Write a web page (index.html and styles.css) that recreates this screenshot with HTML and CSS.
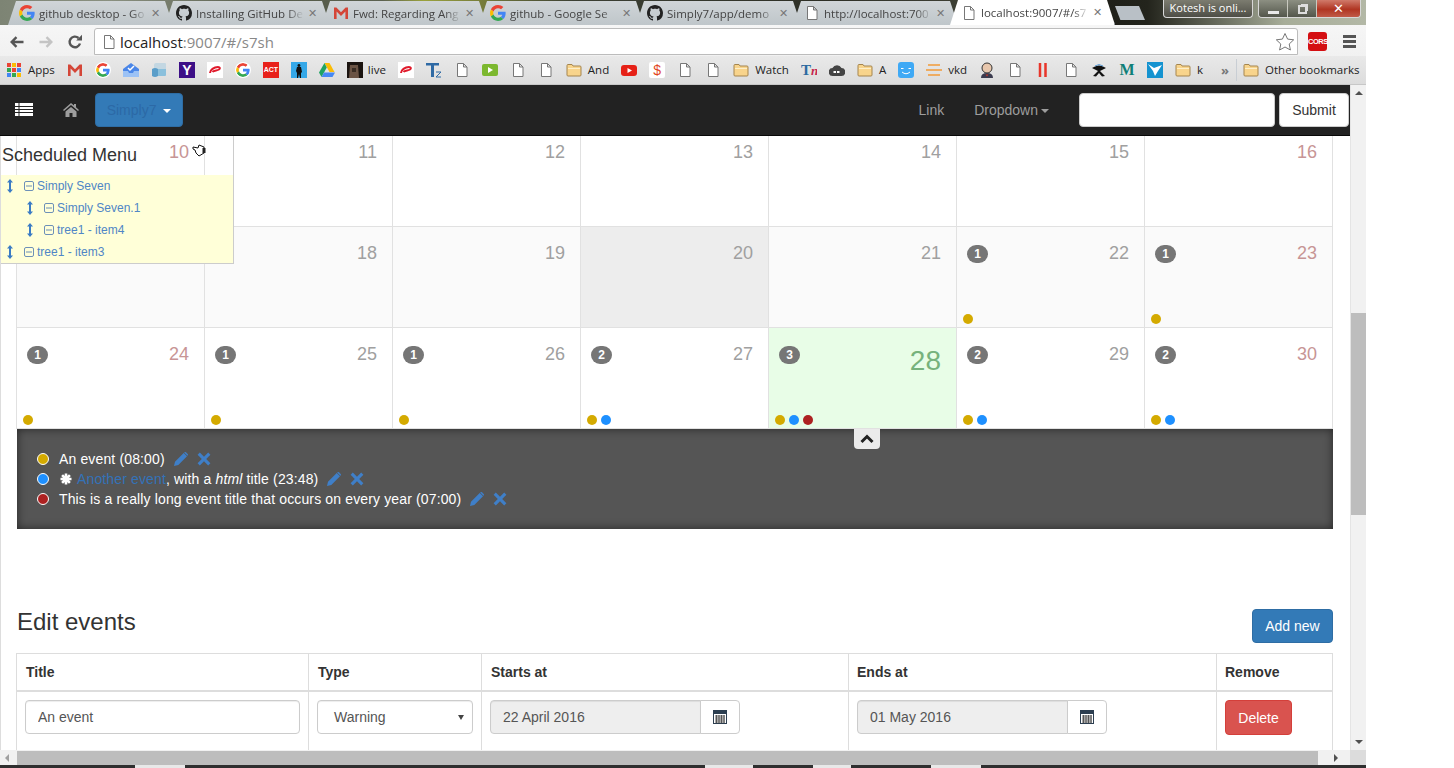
FILE: index.html
```html
<!DOCTYPE html>
<html lang="en">
<head>
<meta charset="utf-8">
<title>localhost:9007/#/s7sh</title>
<link rel="stylesheet" href="styles.css">
</head>
<body>
<svg class="defs" width="0" height="0" aria-hidden="true">
  <symbol id="doc" viewBox="0 0 16 16"><path d="M3.5 1.5h6l3.5 3.5v9.5h-9.5z M9.5 1.5v3.5h3.5" fill="#fff" stroke="#777" stroke-width="1"/></symbol>
  <symbol id="folder" viewBox="0 0 16 16"><path d="M1 3.5q0-1 1-1h4l1 1.5h7q1 0 1 1v8q0 1-1 1H2q-1 0-1-1z" fill="#f8d48c" stroke="#a5854e"/><path d="M2 6h12v1H2z" fill="#fdeec8"/></symbol>
  <symbol id="g" viewBox="0 0 48 48">
    <path fill="#EA4335" d="M24 9.5c3.54 0 6.71 1.22 9.21 3.6l6.85-6.85C35.9 2.38 30.47 0 24 0 14.62 0 6.51 5.38 2.56 13.22l7.98 6.19C12.43 13.72 17.74 9.5 24 9.5z"/>
    <path fill="#4285F4" d="M46.98 24.55c0-1.57-.15-3.09-.38-4.55H24v9.02h12.94c-.58 2.96-2.26 5.48-4.78 7.18l7.73 6c4.51-4.18 7.09-10.36 7.09-17.65z"/>
    <path fill="#FBBC05" d="M10.53 28.59c-.48-1.45-.76-2.99-.76-4.59s.27-3.14.76-4.59l-7.98-6.19C.92 16.46 0 20.12 0 24c0 3.88.92 7.54 2.56 10.78l7.97-6.19z"/>
    <path fill="#34A853" d="M24 48c6.48 0 11.93-2.13 15.89-5.81l-7.73-6c-2.15 1.45-4.92 2.3-8.16 2.3-6.26 0-11.57-4.22-13.47-9.91l-7.98 6.19C6.51 42.62 14.62 48 24 48z"/>
  </symbol>
  <symbol id="gh" viewBox="0 0 16 16"><path fill="#222" d="M8 0C3.58 0 0 3.58 0 8c0 3.54 2.29 6.53 5.47 7.59.4.07.55-.17.55-.38 0-.19-.01-.82-.01-1.49-2.01.37-2.53-.49-2.69-.94-.09-.23-.48-.94-.82-1.13-.28-.15-.68-.52-.01-.53.63-.01 1.08.58 1.23.82.72 1.21 1.87.87 2.33.66.07-.52.28-.87.51-1.07-1.78-.2-3.64-.89-3.64-3.95 0-.87.31-1.59.82-2.15-.08-.2-.36-1.02.08-2.12 0 0 .67-.21 2.2.82.64-.18 1.32-.27 2-.27.68 0 1.36.09 2 .27 1.53-1.04 2.2-.82 2.2-.82.44 1.1.16 1.92.08 2.12.51.56.82 1.27.82 2.15 0 3.07-1.87 3.75-3.65 3.95.29.25.54.73.54 1.48 0 1.07-.01 1.93-.01 2.2 0 .21.15.46.55.38A8.013 8.013 0 0016 8c0-4.42-3.58-8-8-8z"/></symbol>
  <symbol id="gmail" viewBox="0 0 16 16"><path fill="#d44638" d="M1 2.5h2.4L8 7.2l4.6-4.7H15V14h-2.6V6.6L8 11 3.6 6.6V14H1z"/></symbol>
  <symbol id="airtel" viewBox="0 0 16 16"><rect width="16" height="16" fill="#fff"/><path d="M3 11c0-3 4-6 8-6 2 0 2.500 1.500 1 2.500-2 1.300-5 .5-6.500 2.500" fill="none" stroke="#e01a2b" stroke-width="2"/></symbol>
  <symbol id="pencil" viewBox="0 0 14 14"><path fill="#3f7fc8" d="M0 14l1-4.200L9.700 1l3.300 3.300L4.300 13zM10.500.3q.8-.6 1.500 0l1.700 1.700q.6.700 0 1.500l-.3.300-3.300-3.300z"/></symbol>
  <symbol id="cross" viewBox="0 0 14 14"><path fill="#3f7fc8" d="M2.800.6L7 4.800 11.200.6l2.200 2.200L9.200 7l4.200 4.200-2.200 2.200L7 9.200l-4.200 4.200-2.200-2.200L4.800 7 .6 2.800z"/></symbol>
  <symbol id="cal" viewBox="0 0 14 14"><rect x=".5" y=".5" width="13" height="13" fill="#fff" stroke="#2c3e50"/><rect x="1" y="1" width="12" height="3" fill="#2c3e50"/><path d="M2 6h10M2 8h10M2 10h10M2 12h10M3.500 5v8M6 5v8M8.500 5v8M11 5v8" stroke="#555" stroke-width="1"/></symbol>
  <symbol id="updown" viewBox="0 0 8 14"><path fill="#3a7bc4" d="M4 0l3 3.500H5v7h2L4 14l-3-3.500h2v-7H1z"/></symbol>
  <symbol id="minus" viewBox="0 0 10 10"><rect x=".5" y=".5" width="9" height="9" rx="1.500" fill="none" stroke="#6d90b8"/><path d="M2 5h6" stroke="#6d90b8"/></symbol>
</svg>

<div class="gutter">
<div class="screen">
  <div class="tabstrip">
    <div class="tab"><svg class="fav"><use href="#g"/></svg><span class="tab-title">github desktop - Go</span><span class="tab-x">✕</span></div>
    <div class="tab"><svg class="fav"><use href="#gh"/></svg><span class="tab-title">Installing GitHub De</span><span class="tab-x">✕</span></div>
    <div class="tab"><svg class="fav"><use href="#gmail"/></svg><span class="tab-title">Fwd: Regarding Ang</span><span class="tab-x">✕</span></div>
    <div class="tab"><svg class="fav"><use href="#g"/></svg><span class="tab-title">github - Google Se</span><span class="tab-x">✕</span></div>
    <div class="tab"><svg class="fav"><use href="#gh"/></svg><span class="tab-title">Simply7/app/demo</span><span class="tab-x">✕</span></div>
    <div class="tab"><svg class="fav"><use href="#doc"/></svg><span class="tab-title">http://localhost:700</span><span class="tab-x">✕</span></div>
    <div class="tab tab-active"><svg class="fav"><use href="#doc"/></svg><span class="tab-title">localhost:9007/#/s7</span><span class="tab-x">✕</span></div>
    <div class="newtab"></div>
    <div class="notifier">Kotesh is onli...</div>
    <div class="winctl">
      <span class="win win-min"><i class="min-bar"></i></span>
      <span class="win win-max"><i class="max-box"></i></span>
      <span class="win win-close">✕</span>
    </div>
  </div>

  <div class="toolbar">
    <svg class="tool" viewBox="0 0 16 16"><path d="M14.500 8H3M7.500 3.200L2.700 8l4.800 4.800" fill="none" stroke="#555" stroke-width="2.400"/></svg>
    <svg class="tool" viewBox="0 0 16 16"><path d="M1.500 8H13M8.500 3.200L13.300 8l-4.800 4.800" fill="none" stroke="#c4c4c4" stroke-width="2.400"/></svg>
    <svg class="tool" viewBox="0 0 16 16"><path d="M13 9.500A5.300 5.300 0 1 1 11.500 4" fill="none" stroke="#555" stroke-width="2.400"/><path d="M9.200 6.500H15V.8z" fill="#555"/></svg>
    <div class="omnibox">
      <svg class="omni-doc"><use href="#doc"/></svg>
      <span class="url"><span class="url-host">localhost</span>:9007/#/s7sh</span>
      <svg class="star" viewBox="0 0 20 20"><path d="M10 1.500l2.600 5.600 6.100.7-4.500 4.200 1.200 6L10 15l-5.400 3 1.200-6L1.300 7.800l6.100-.7z" fill="#fff" stroke="#777"/></svg>
    </div>
    <span class="cors">CORS</span>
    <span class="hamburger"><i></i><i></i><i></i></span>
  </div>

  <div class="bookmarks">
    <a class="bm bm-text"><svg class="ic" viewBox="0 0 16 16"><path fill="#ea4335" d="M1 1h4v4H1z"/><path fill="#fbbc05" d="M6 1h4v4H6z"/><path fill="#ea4335" d="M11 1h4v4h-4z"/><path fill="#34a853" d="M1 6h4v4H1z"/><path fill="#ea4335" d="M6 6h4v4H6z"/><path fill="#4285f4" d="M11 6h4v4h-4z"/><path fill="#4285f4" d="M1 11h4v4H1z"/><path fill="#34a853" d="M6 11h4v4H6z"/><path fill="#fbbc05" d="M11 11h4v4h-4z"/></svg>Apps</a>
    <a class="bm"><svg class="ic"><use href="#gmail"/></svg></a>
    <a class="bm"><svg class="ic round"><use href="#g"/></svg></a>
    <a class="bm"><svg class="ic" viewBox="0 0 16 16"><path fill="#4a86e8" d="M0 7l8-6 8 6v8H0z"/><path fill="#9cc2f5" d="M0 9h5l1 2h4l1-2h5v6H0z"/><path d="M5 6l2 2 4-4" fill="none" stroke="#fff" stroke-width="1.500"/></svg></a>
    <a class="bm"><svg class="ic" viewBox="0 0 16 16"><path fill="#c3d7e2" d="M5 1h9q1 0 1 1v5H3V3q0-2 2-2z"/><path fill="#5b9ec9" d="M1 7q3-2 6 0v7q-3 2-6 0z"/><path fill="#8bc0dc" d="M7 7h8v6q0 1-1 1H7z"/></svg></a>
    <a class="bm"><span class="sq sq-yahoo">Y</span></a>
    <a class="bm"><svg class="ic"><use href="#airtel"/></svg></a>
    <a class="bm"><svg class="ic round"><use href="#g"/></svg></a>
    <a class="bm"><span class="sq sq-act">ACT</span></a>
    <a class="bm"><svg class="ic" viewBox="0 0 16 16"><rect width="16" height="16" fill="#35a8e8"/><path d="M8 2a1.500 1.500 0 1 1-.1 0zM6 5h4l1 5-1 1v5H9l-1-4-1 4H6v-5L5 9z" fill="#111"/></svg></a>
    <a class="bm"><svg class="ic" viewBox="0 0 16 16"><path fill="#fbbc05" d="M5.500 1h5l5 9h-5z"/><path fill="#1ea362" d="M5.500 1L0 10.500 2.500 15l5.300-9.500z"/><path fill="#4688f4" d="M5 10.500h11L13.500 15h-11z"/></svg></a>
    <a class="bm bm-text bm-tight"><svg class="ic" viewBox="0 0 16 16"><rect width="16" height="16" fill="#1b1410"/><path fill="#6b5445" d="M3 3h8l1 13H2z"/><path fill="#3a2d24" d="M5 6h4v4H5z"/></svg>live</a>
    <a class="bm"><svg class="ic"><use href="#airtel"/></svg></a>
    <a class="bm"><svg class="ic" viewBox="0 0 16 16"><path fill="#2f6aa5" d="M0 1h13v2.500H8V15H5V3.500H0z"/><path d="M10 10h5l-5 5h5" fill="none" stroke="#2f6aa5"/></svg></a>
    <a class="bm"><svg class="ic"><use href="#doc"/></svg></a>
    <a class="bm"><svg class="ic" viewBox="0 0 16 16"><rect y="2" width="16" height="12" rx="2" fill="#7cb82f"/><path d="M6 5l5 3-5 3z" fill="#fff"/></svg></a>
    <a class="bm"><svg class="ic"><use href="#doc"/></svg></a>
    <a class="bm"><svg class="ic"><use href="#doc"/></svg></a>
    <a class="bm bm-text"><svg class="ic"><use href="#folder"/></svg>And</a>
    <a class="bm"><svg class="ic" viewBox="0 0 16 16"><rect y="3" width="16" height="11" rx="3" fill="#e62117"/><path d="M6.500 6l4.500 2.500L6.500 11z" fill="#fff"/></svg></a>
    <a class="bm"><span class="sq sq-dollar">$</span></a>
    <a class="bm"><svg class="ic"><use href="#doc"/></svg></a>
    <a class="bm"><svg class="ic"><use href="#doc"/></svg></a>
    <a class="bm bm-text"><svg class="ic"><use href="#folder"/></svg>Watch</a>
    <a class="bm"><span class="sq sq-tn">T<em>n</em></span></a>
    <a class="bm"><svg class="ic" viewBox="0 0 16 16"><path fill="#444" d="M4 14a4 4 0 0 1-.5-8A5 5 0 0 1 12.500 6 4 4 0 0 1 12 14z"/><path d="M4.500 10h7" stroke="#fff" stroke-width="2" stroke-dasharray="2.500 1"/></svg></a>
    <a class="bm bm-text"><svg class="ic"><use href="#folder"/></svg>A</a>
    <a class="bm"><svg class="ic" viewBox="0 0 16 16"><rect width="16" height="16" rx="3" fill="#3fa9f5"/><path d="M3 6.500h2.500M10.500 6.500H13M4 10q4 3.500 8 0" fill="none" stroke="#fff"/></svg></a>
    <a class="bm bm-text"><svg class="ic" viewBox="0 0 16 16"><path d="M2 3h12M0 8h16M2 13h12" stroke="#f29b38" stroke-width="1.500"/></svg>vkd</a>
    <a class="bm"><svg class="ic" viewBox="0 0 16 16"><circle cx="8" cy="6" r="5" fill="#e8c7ad" stroke="#333"/><path d="M2 16q0-5 6-5t6 5z" fill="#3b3b4f"/><path d="M6.500 12.500h3l-1.500 2z" fill="#c0392b"/></svg></a>
    <a class="bm"><svg class="ic"><use href="#doc"/></svg></a>
    <a class="bm"><svg class="ic" viewBox="0 0 16 16"><path d="M5 1v14M10.500 1v14" stroke="#e8352a" stroke-width="2.500"/></svg></a>
    <a class="bm"><svg class="ic"><use href="#doc"/></svg></a>
    <a class="bm"><svg class="ic" viewBox="0 0 16 16"><path d="M1 6q7-5 14 0L9 9l5 5-3 .5L8 11l-3 3.500L2 14l5-5z" fill="#111"/><path d="M4 4q4-3 8 0" stroke="#5a9bd5" fill="none"/></svg></a>
    <a class="bm"><span class="sq sq-m">M</span></a>
    <a class="bm"><svg class="ic" viewBox="0 0 16 16"><rect width="16" height="16" fill="#1593d0"/><path d="M1 2l6 4 8-3-4 6-3 5-2-5z" fill="#fff"/></svg></a>
    <a class="bm bm-text"><svg class="ic"><use href="#folder"/></svg>k</a>
    <span class="chev">»</span>
    <span class="bm-sep"></span>
    <a class="bm bm-text"><svg class="ic"><use href="#folder"/></svg>Other bookmarks</a>
  </div>

  <div class="viewport">
    <div class="page">
      <nav class="navbar">
        <svg class="nav-list" viewBox="0 0 18 14"><path d="M0 0h18v3H0zM0 4h18v2H0zM0 7h18v2H0zM0 10h18v3H0z" fill="#fff"/><path d="M4 0v13" stroke="#222"/></svg>
        <svg class="nav-home" viewBox="0 0 16 14"><path fill="#9d9d9d" d="M8 0l3 2.600V1h2v3.300L16 7l-1 1-7-6-7 6-1-1zM2.500 8.500L8 4l5.500 4.500V14H9.500v-4h-3v4h-4z"/></svg>
        <button class="btn-simply">Simply7 <span class="caret caret-white"></span></button>
        <a class="nav-link nav-first">Link</a>
        <a class="nav-link">Dropdown<span class="caret"></span></a>
        <input class="nav-input" type="text" aria-label="Search">
        <button class="nav-submit">Submit</button>
      </nav>

      <main class="content">
        <section class="calendar">
          <div class="week">
            <div class="day"><div class="day-top"><span class="num num-end">10</span></div></div>
            <div class="day"><div class="day-top"><span class="num">11</span></div></div>
            <div class="day"><div class="day-top"><span class="num">12</span></div></div>
            <div class="day"><div class="day-top"><span class="num">13</span></div></div>
            <div class="day"><div class="day-top"><span class="num">14</span></div></div>
            <div class="day"><div class="day-top"><span class="num">15</span></div></div>
            <div class="day"><div class="day-top"><span class="num num-end">16</span></div></div>
          </div>
          <div class="week week-alt">
            <div class="day"><div class="day-top"><span class="num num-end">17</span></div></div>
            <div class="day"><div class="day-top"><span class="num">18</span></div></div>
            <div class="day"><div class="day-top"><span class="num">19</span></div></div>
            <div class="day day-grey"><div class="day-top"><span class="num">20</span></div></div>
            <div class="day"><div class="day-top"><span class="num">21</span></div></div>
            <div class="day"><div class="day-top"><span class="badge">1</span><span class="num">22</span></div><div class="dots"><i class="dot dot-y"></i></div></div>
            <div class="day"><div class="day-top"><span class="badge">1</span><span class="num num-end">23</span></div><div class="dots"><i class="dot dot-y"></i></div></div>
          </div>
          <div class="week">
            <div class="day"><div class="day-top"><span class="badge">1</span><span class="num num-end">24</span></div><div class="dots"><i class="dot dot-y"></i></div></div>
            <div class="day"><div class="day-top"><span class="badge">1</span><span class="num">25</span></div><div class="dots"><i class="dot dot-y"></i></div></div>
            <div class="day"><div class="day-top"><span class="badge">1</span><span class="num">26</span></div><div class="dots"><i class="dot dot-y"></i></div></div>
            <div class="day"><div class="day-top"><span class="badge">2</span><span class="num">27</span></div><div class="dots"><i class="dot dot-y"></i><i class="dot dot-b"></i></div></div>
            <div class="day day-today"><div class="day-top"><span class="badge">3</span><span class="num num-today">28</span></div><div class="dots"><i class="dot dot-y"></i><i class="dot dot-b"></i><i class="dot dot-r"></i></div></div>
            <div class="day"><div class="day-top"><span class="badge">2</span><span class="num">29</span></div><div class="dots"><i class="dot dot-y"></i><i class="dot dot-b"></i></div></div>
            <div class="day"><div class="day-top"><span class="badge">2</span><span class="num num-end">30</span></div><div class="dots"><i class="dot dot-y"></i><i class="dot dot-b"></i></div></div>
          </div>
        </section>

        <section class="slide">
          <span class="slide-toggle"><svg viewBox="0 0 14 10"><path d="M1.500 8L7 2.500 12.500 8" fill="none" stroke="#222" stroke-width="3"/></svg></span>
          <ul class="events">
            <li class="event"><i class="ev-dot dot-y"></i><span>An event (08:00)</span><svg class="act"><use href="#pencil"/></svg><svg class="act"><use href="#cross"/></svg></li>
            <li class="event"><i class="ev-dot dot-b"></i><svg class="aster" viewBox="0 0 12 12"><path d="M6 .5v11M.5 6h11M2.100 2.100l7.800 7.800M2.100 9.900l7.800-7.800" stroke="#fff" stroke-width="2.600"/></svg><span><a class="ev-link">Another event</a>, with a <em>html</em> title (23:48)</span><svg class="act"><use href="#pencil"/></svg><svg class="act"><use href="#cross"/></svg></li>
            <li class="event"><i class="ev-dot dot-r"></i><span>This is a really long event title that occurs on every year (07:00)</span><svg class="act"><use href="#pencil"/></svg><svg class="act"><use href="#cross"/></svg></li>
          </ul>
        </section>

        <section class="edit">
          <div class="edit-head">
            <h3 class="edit-title">Edit events</h3>
            <button class="btn-add">Add new</button>
          </div>
          <table class="grid">
            <colgroup><col class="c1"><col class="c2"><col class="c3"><col class="c4"><col class="c5"></colgroup>
            <thead><tr><th class="th-wide">Title</th><th class="th-wide">Type</th><th class="th-wide">Starts at</th><th>Ends at</th><th>Remove</th></tr></thead>
            <tbody>
              <tr>
                <td><input class="field" type="text" value="An event" aria-label="Title"></td>
                <td><div class="select"><span>Warning</span><i class="sel-arrow"></i></div></td>
                <td><div class="dategroup"><input class="field field-date" type="text" value="22 April 2016" disabled aria-label="Starts at"><span class="date-btn"><svg><use href="#cal"/></svg></span></div></td>
                <td><div class="dategroup"><input class="field field-date" type="text" value="01 May 2016" disabled aria-label="Ends at"><span class="date-btn"><svg><use href="#cal"/></svg></span></div></td>
                <td><button class="btn-del">Delete</button></td>
              </tr>
            </tbody>
          </table>
        </section>

        <aside class="menu">
          <h4 class="menu-title">Scheduled Menu</h4>
          <svg class="hand" viewBox="0 0 14 14"><path d="M1 4l5 1 1-3 5 2v6l-5 3-3-3-1-3-2-1z" fill="#fff" stroke="#111"/><rect x="10.500" y="5" width="3" height="5" fill="#222"/></svg>
          <ul class="tree">
            <li class="node"><svg class="ud"><use href="#updown"/></svg><svg class="mn"><use href="#minus"/></svg><a>Simply Seven</a></li>
            <li class="node node-sub"><svg class="ud"><use href="#updown"/></svg><svg class="mn"><use href="#minus"/></svg><a>Simply Seven.1</a></li>
            <li class="node node-sub"><svg class="ud"><use href="#updown"/></svg><svg class="mn"><use href="#minus"/></svg><a>tree1 - item4</a></li>
            <li class="node"><svg class="ud"><use href="#updown"/></svg><svg class="mn"><use href="#minus"/></svg><a>tree1 - item3</a></li>
          </ul>
        </aside>
      </main>
    </div>

    <div class="vbar">
      <i class="arr arr-up"></i>
      <div class="vtrack"><div class="vthumb"></div></div>
      <i class="arr arr-down"></i>
    </div>

    <div class="hbar">
      <i class="arr arr-left"></i>
      <div class="hthumb"></div>
      <i class="arr arr-right"></i>
    </div>
    <div class="corner"></div>
  </div>

  <div class="taskstrip"><i class="tk tk1"></i><i class="tk tk2"></i><i class="tk tk3"></i><i class="tk tk4"></i></div>
</div>
</div>
</body>
</html>
```
FILE: styles.css
```css
* { box-sizing: border-box; }
html, body { margin: 0; padding: 0; background: #fff; height: 768px; overflow: hidden; }
body { font-family: "Liberation Sans", Arial, sans-serif; font-size: 14px; color: #333; }
.defs { position: absolute; }
ul { list-style: none; margin: 0; padding: 0; }
a { color: inherit; text-decoration: none; }
button, input { font-family: inherit; }

.gutter { width: 1454px; height: 768px; background: #fff; }
.screen { width: 1366px; height: 768px; display: flex; flex-direction: column; overflow: hidden; }

/* Tab strip */
.tabstrip {
  height: 25px; flex: none; display: flex; align-items: flex-end; padding-left: 8px;
  background: linear-gradient(90deg, #7d8474 0, #8a9080 8%, #545a48 20%, #5b6150 28%, #9aa23d 31%, #3c4034 42%, #2d2f26 60%, #46483c 76%, #1f2019 81%, #23241c 84%, #a7ad99 94%, #b3b8a6 100%);
  font-family: "Open Sans", "Noto Sans", sans-serif; color: #444;
}
.tab {
  width: 165px; height: 24px; margin-right: -8px; padding: 0 10px 0 11px; flex: none;
  display: flex; align-items: center; gap: 4px;
  background: linear-gradient(#d0d5d8, #bfc6ca);
  clip-path: polygon(0 100%, 8px 0, calc(100% - 8px) 0, 100% 100%);
  border-right: 1px solid #8a9196;
}
.tab-active { background: #fff; height: 25px; }
.fav { width: 16px; height: 16px; flex: none; }
.tab-title {
  flex: 1; min-width: 0; white-space: nowrap; font-size: 11.500px;
  -webkit-mask-image: linear-gradient(90deg, #000 85%, transparent 100%);
  mask-image: linear-gradient(90deg, #000 85%, transparent 100%);
}
.tab-x { width: 11px; font-size: 11px; font-weight: 700; color: #777; flex: none; font-family: "DejaVu Sans", sans-serif; }
.newtab {
  width: 30px; height: 14px; margin: 0 0 5px 8px; flex: none; background: #b9c0c6;
  clip-path: polygon(0 0, 80% 0, 100% 100%, 18% 100%);
}
.notifier {
  width: 90px; height: 18px; margin: 0 5px 7px 18px; flex: none; border: 1px solid #d8d8d8; border-top: 0;
  border-radius: 0 0 4px 4px; background: linear-gradient(#7c7c70, #4e4e46);
  color: #fff; font-size: 11px; line-height: 15px; text-align: center; white-space: nowrap; overflow: hidden;
}
.winctl {
  width: 103px; height: 18px; margin: 0 0 7px 0; flex: none; display: flex;
  border: 1px solid #d8d8d8; border-top: 0; border-radius: 0 0 4px 4px; overflow: hidden;
}
.win { display: flex; align-items: center; justify-content: center; width: 29px; background: linear-gradient(#8c8f82, #53564b); border-right: 1px solid #c9c9c0; color: #fff; }
.win-close { flex: 1; border-right: 0; background: linear-gradient(#d07a6a, #b03522 55%, #c05a48); font-size: 13px; font-weight: 700; font-family: "DejaVu Sans", sans-serif; }
.min-bar { width: 11px; height: 3px; margin-top: 7px; background: #e8e8e8; }
.max-box { width: 9px; height: 9px; margin-top: 2px; border: 2px solid #ddd; box-shadow: 2px -2px 0 -1px #ddd; }

/* Toolbar */
.toolbar { height: 31px; flex: none; display: flex; align-items: center; padding: 2px 8px 0 9px; background: linear-gradient(#f6f6f6, #f1f1f1); }
.tool { width: 16px; height: 16px; flex: none; margin-right: 13px; }
.omnibox {
  width: 1204px; height: 27px; margin: 0 0 0 -2px; flex: none; display: flex; align-items: center; padding: 0 2px 0 6px;
  background: #fff; border: 1px solid #bcbcbc; border-radius: 3px 3px 0 0;
}
.omni-doc { width: 16px; height: 16px; flex: none; margin-right: 3px; }
.url { flex: 1; font-family: "Open Sans", "Noto Sans", sans-serif; font-size: 15px; color: #888; }
.url-host { color: #222; }
.star { width: 20px; height: 20px; flex: none; }
.cors { width: 19px; height: 19px; margin: 0 0 0 10px; border-radius: 3px; background: #d40f12; color: #fff; font-size: 7.500px; letter-spacing: -.5px; font-weight: 700; line-height: 19px; text-align: center; flex: none; }
.hamburger { margin-left: 16px; width: 13px; display: flex; flex-direction: column; gap: 2px; flex: none; }
.hamburger i { height: 3px; background: #555; }

/* Bookmarks */
.bookmarks {
  height: 28px; flex: none; display: flex; align-items: center; white-space: nowrap;
  background: linear-gradient(#e9e9e9, #dcdcdc); color: #222;
  font-family: "Open Sans", "Noto Sans", sans-serif; font-size: 11.500px;
}
.bm { display: flex; align-items: center; gap: 6px; padding: 0 6px 2px; flex: none; }
.bm-tight { gap: 5px; }
.ic { width: 16px; height: 16px; flex: none; display: block; margin-bottom: -2px; }
.round { background: #fff; border-radius: 50%; padding: 1px; }
.sq { width: 16px; height: 16px; display: block; overflow: hidden; text-align: center; font-family: "Liberation Sans", sans-serif; font-weight: 700; margin-bottom: -2px; }
.sq-yahoo { background: #3d0f87; color: #fff; font-size: 14px; line-height: 16px; }
.sq-act { background: #e8201a; color: #fff; font-size: 7px; line-height: 16px; }
.sq-dollar { background: #fff; color: #e2471d; font-size: 14px; line-height: 16px; border-radius: 2px; font-weight: 400; }
.sq-tn { color: #2c6aa0; font-family: "Liberation Serif", serif; font-size: 15px; line-height: 16px; }
.sq-tn em { color: #c6264e; font-size: 13px; }
.sq-m { color: #0f7f78; background: transparent; font-family: "Liberation Serif", serif; font-size: 16px; line-height: 16px; }
.chev { width: 12px; margin: 0 3px 0 12px; color: #777; font-weight: 700; font-size: 13px; flex: none; }
.bm-sep { width: 1px; height: 22px; background: #c9ced4; flex: none; }

/* Viewport */
.viewport {
  height: 681px; flex: none; display: grid;
  grid-template-columns: 1350px 16px; grid-template-rows: 665px 16px;
  border-top: 1px solid #c7c7c7;
}
.page { display: flex; flex-direction: column; overflow: hidden; background: #fff; }
.navbar {
  height: 51px; flex: none; display: flex; align-items: center; padding: 0 1px 0 15px;
  background: #222; border-bottom: 1px solid #080808;
}
.nav-list { width: 18px; height: 14px; flex: none; }
.nav-home { width: 16px; height: 14px; margin-left: 30px; flex: none; }
.btn-simply {
  width: 88px; height: 34px; margin-left: 16px; padding: 0; flex: none;
  background: #337ab7; border: 1px solid #2e6da4; border-radius: 4px; color: #2c69a6; font-size: 14px;
}
.caret { display: inline-block; width: 0; height: 0; margin-left: 3px; vertical-align: middle; border-top: 4px solid #9d9d9d; border-left: 4px solid transparent; border-right: 4px solid transparent; }
.caret-white { border-top-color: #fff; }
.nav-link { color: #9d9d9d; font-size: 14px; flex: none; margin-left: 30px; }
.nav-first { margin-left: auto; }
.nav-input { width: 196px; height: 34px; margin-left: 30px; flex: none; background: #fff; border: 1px solid #ccc; border-radius: 4px; }
.nav-submit { width: 70px; height: 34px; margin-left: 4px; flex: none; background: #fff; border: 1px solid #ccc; border-radius: 4px; color: #333; font-size: 14px; padding: 0; }

.content { flex: 1; min-height: 0; position: relative; overflow: hidden; border-left: 1px solid #ddd; }

/* Calendar */
.calendar { margin: -10px 0 0 15px; width: 1317px; }
.week { display: grid; grid-template-columns: repeat(7, 188px); height: 101px; border-bottom: 1px solid #e1e1e1; border-right: 1px solid #e1e1e1; }
.week-alt { background: #fafafa; }
.day { display: flex; flex-direction: column; padding: 16px 15px 3px 10px; border-left: 1px solid #e1e1e1; }
.day-grey { background: #ededed; }
.day-today { background: #e8fde7; }
.day-top { display: flex; justify-content: space-between; align-items: flex-start; }
.num { margin-left: auto; font-size: 18px; line-height: 20px; color: #a0a0a0; }
.num-end { color: #c79595; }
.num-today { font-size: 28px; line-height: 34px; color: #76b27c; }
.badge { width: 21px; height: 18px; margin-top: 2px; border-radius: 10px; background: #767676; color: #fff; font-size: 12px; font-weight: 700; line-height: 18px; text-align: center; }
.dots { margin: auto 0 0 -4px; display: flex; gap: 4px; }
.dot { width: 10px; height: 10px; border-radius: 50%; display: block; }
.dot-y { background: #d4aa00; }
.dot-b { background: #1e90ff; }
.dot-r { background: #ad2121; }

/* Slide */
.slide { position: relative; margin: 0 0 0 16px; width: 1316px; height: 100px; padding: 20px 20px 0; background: #555; box-shadow: inset 0 0 10px rgba(0,0,0,.55); color: #fff; }
.slide-toggle { position: absolute; left: 837px; top: 0; width: 26px; height: 20px; background: #ebebeb; border-radius: 0 0 4px 4px; display: flex; align-items: center; justify-content: center; }
.slide-toggle svg { width: 14px; height: 10px; display: block; }
.event { display: flex; align-items: center; height: 20px; letter-spacing: .14px; }
.ev-dot { width: 12px; height: 12px; border-radius: 50%; border: 1px solid #fff; margin-right: 10px; flex: none; }
.aster { width: 12px; height: 12px; margin-left: 1px; margin-right: 5px; flex: none; }
.ev-link { color: #3472b8; }
.act { width: 14px; height: 14px; flex: none; margin-left: 9px; }

/* Edit */
.edit { margin: 80px 0 0 16px; width: 1316px; }
.edit-head { display: flex; justify-content: space-between; align-items: flex-start; margin-bottom: 10px; }
.edit-title { margin: 0; font-size: 24px; font-weight: 400; line-height: 26px; color: #333; }
.btn-add { width: 81px; height: 34px; padding: 0; background: #337ab7; border: 1px solid #2e6da4; border-radius: 4px; color: #fff; font-size: 14px; }
.grid { border-collapse: collapse; table-layout: fixed; width: 1316px; margin-left: -1px; }
.c1 { width: 292px; } .c2 { width: 173px; } .c3 { width: 367px; } .c4 { width: 368px; } .c5 { width: 116px; }
.grid th, .grid td { border: 1px solid #ddd; padding: 8px; text-align: left; vertical-align: top; }
.grid td { padding-bottom: 24px; }
.grid th { font-weight: 700; line-height: 20px; border-bottom-width: 2px; }
.grid .th-wide { padding-left: 9px; }
.field { display: block; width: 100%; height: 34px; padding: 6px 12px; font-size: 14px; color: #555; background: #fff; border: 1px solid #ccc; border-radius: 4px; box-shadow: inset 0 1px 1px rgba(0,0,0,.075); }
.select { height: 34px; display: flex; align-items: center; justify-content: space-between; padding: 0 8px 0 16px; border: 1px solid #ccc; border-radius: 4px; color: #555; box-shadow: inset 0 1px 1px rgba(0,0,0,.075); }
.sel-arrow { width: 0; height: 0; border-top: 5px solid #444; border-left: 3px solid transparent; border-right: 3px solid transparent; }
.dategroup { display: flex; width: 250px; }
.field-date { flex: 1; min-width: 0; width: auto; background: #eee; border-radius: 4px 0 0 4px; opacity: 1; -webkit-text-fill-color: #555; }
.date-btn { width: 40px; height: 34px; flex: none; display: flex; align-items: center; justify-content: center; margin-left: -1px; background: #fff; border: 1px solid #ccc; border-radius: 0 4px 4px 0; }
.date-btn svg { width: 14px; height: 14px; display: block; }
.btn-del { width: 67px; height: 35px; padding: 0; background: #d9534f; border: 1px solid #d43f3a; border-radius: 4px; color: #fff; font-size: 14px; }

/* Floating menu */
.menu { position: absolute; left: -1px; top: 0; width: 234px; height: 128px; border-right: 1px solid #ccc; border-bottom: 1px solid #ccc; }
.menu-title { margin: 0; height: 39px; padding-left: 2px; font-size: 18px; font-weight: 400; line-height: 38px; color: #333; }
.hand { position: absolute; left: 192px; top: 7px; width: 14px; height: 14px; }
.tree { height: 88px; background: #ffffd8; padding-top: 0; font-size: 12px; color: #4f86c6; }
.node { height: 22px; display: flex; align-items: center; padding-left: 6px; }
.node-sub { padding-left: 26px; }
.ud { width: 8px; height: 14px; flex: none; margin-right: 10px; }
.mn { width: 10px; height: 10px; flex: none; margin-right: 3px; }

/* Scrollbars */
.vbar { background: #f1f1f1; display: flex; flex-direction: column; align-items: center; justify-content: space-between; border-left: 1px solid #e4e4e4; }
.vtrack { flex: 1; width: 100%; padding-top: 218px; }
.vthumb { height: 202px; margin: 0; background: #bdbdbd; }
.hbar { display: flex; align-items: center; background: #f1f1f1; padding-bottom: 1px; }
.hthumb { width: 1301px; height: 14px; margin-left: 8px; background: #bdbdbd; }
.arr { width: 0; height: 0; display: block; border: 4px solid transparent; }
.arr-up { border-bottom-color: #505050; border-top-width: 0; margin-top: 6px; }
.arr-down { border-top-color: #505050; border-bottom-width: 0; margin-bottom: 6px; }
.arr-left { border-right-color: #a0a0a0; border-left-width: 0; margin-left: 5px; }
.arr-right { border-left-color: #505050; border-right-width: 0; margin-left: 16px; }
.corner { background: #dcdcdc; }

/* Bottom edge */
.taskstrip { height: 3px; flex: none; display: flex; background: #2f2f2f; }
.tk { height: 3px; background: #e8e8e8; display: block; }
.tk1 { width: 50px; margin-left: 135px; }
.tk2 { width: 48px; margin-left: 520px; }
.tk3 { width: 38px; margin-left: 60px; }
.tk4 { width: 50px; margin-left: 80px; }
```
